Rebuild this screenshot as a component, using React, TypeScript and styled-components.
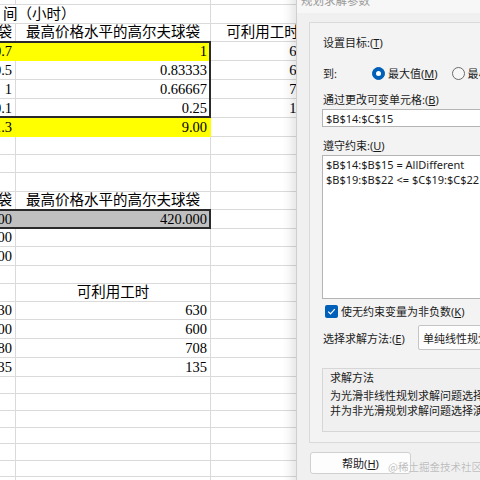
import React from 'react';
import styled, { createGlobalStyle } from 'styled-components';

const Global = createGlobalStyle`
  html, body { margin: 0; padding: 0; background: #fff; }
  #root { width: 480px; height: 480px; }
`;

const Screen = styled.div`
  position: relative;
  width: 480px;
  height: 480px;
  overflow: hidden;
  background: #fff;
`;

const rowHeights = [5, 19, 18, 19, 19, 19, 19, 19, 18, 18, 19, 18, 19, 18, 19, 18, 18, 18, 19, 19, 19, 17, 17, 17, 16, 17, 16, 17];

const Sheet = styled.div`
  display: grid;
  grid-template-columns: 16px 195px 104px;
  grid-template-rows: ${rowHeights.map((h) => h + 'px').join(' ')};
  font-family: "Liberation Serif", "Noto Sans CJK SC", serif;
  font-size: 14.5px;
  color: #000;
  text-spacing-trim: space-all;
`;

type Align = 'l' | 'r' | 'c';

const Cell = styled.div<{ $fill?: string; $align?: Align; $span?: number; $row: number; $col: number }>`
  box-sizing: border-box;
  grid-row: ${(p) => p.$row};
  grid-column: ${(p) => p.$col} / span ${(p) => p.$span ?? 1};
  border-right: 1px solid ${(p) => p.$fill ?? '#dadada'};
  border-bottom: 1px solid ${(p) => p.$fill ?? '#dadada'};
  background: ${(p) => p.$fill ?? '#fff'};
  overflow: hidden;
  white-space: nowrap;
  display: flex;
  align-items: flex-end;
  justify-content: ${(p) => (p.$align === 'r' ? 'flex-end' : p.$align === 'c' ? 'center' : 'flex-start')};
  padding: 0 3px 0 3px;
  line-height: 17px;
`;

const CellText = styled.span`
  flex: none;
`;

const Frame = styled.div<{ $rows: string }>`
  grid-column: 1 / 3;
  grid-row: ${(p) => p.$rows};
  border: 2px solid #2a2a2a;
  border-left: none;
  margin-top: -1px;
  pointer-events: none;
`;

const Y = '#ffff00';
const G = '#c0c0c0';

type C = { t?: string; a?: Align; f?: string; s?: number };
const rows: C[][] = [
  [{}, {}, {}],
  [{ t: '间（小时）', a: 'l', s: 2 }, {}],
  [{ t: '球袋', a: 'r' }, { t: '最高价格水平的高尔夫球袋', a: 'c' }, { t: '可利用工时', a: 'c' }],
  [{ t: '0.7', a: 'r', f: Y }, { t: '1', a: 'r', f: Y }, { t: '630', a: 'r' }],
  [{ t: '0.5', a: 'r' }, { t: '0.83333', a: 'r' }, { t: '600', a: 'r' }],
  [{ t: '1', a: 'r' }, { t: '0.66667', a: 'r' }, { t: '708', a: 'r' }],
  [{ t: '0.1', a: 'r' }, { t: '0.25', a: 'r' }, { t: '135', a: 'r' }],
  [{ t: '1.3', a: 'r', f: Y }, { t: '9.00', a: 'r', f: Y }, {}],
  [{}, {}, {}],
  [{}, {}, {}],
  [{}, {}, {}],
  [{ t: '球袋', a: 'r' }, { t: '最高价格水平的高尔夫球袋', a: 'c' }, {}],
  [{ t: '600.000', a: 'r', f: G }, { t: '420.000', a: 'r', f: G }, {}],
  [{ t: '600.000', a: 'r' }, {}, {}],
  [{ t: '300.000', a: 'r' }, {}, {}],
  [{}, {}, {}],
  [{}, { t: '可利用工时', a: 'c' }, {}],
  [{ t: '630', a: 'r' }, { t: '630', a: 'r' }, {}],
  [{ t: '600', a: 'r' }, { t: '600', a: 'r' }, {}],
  [{ t: '480', a: 'r' }, { t: '708', a: 'r' }, {}],
  [{ t: '135', a: 'r' }, { t: '135', a: 'r' }, {}],
  [{}, {}, {}],
  [{}, {}, {}],
  [{}, {}, {}],
  [{}, {}, {}],
  [{}, {}, {}],
  [{}, {}, {}],
  [{}, {}, {}],
];

/* ---------- dialog ---------- */

const Dialog = styled.div`
  position: absolute;
  left: 296px;
  top: -12px;
  width: 320px;
  height: 500px;
  background: #f0f0f0;
  border-left: 1px solid #cfcfcf;
  box-shadow: -5px 0 9px rgba(0, 0, 0, 0.1);
  display: flex;
  flex-direction: column;
  font-family: "Noto Sans", "Noto Sans CJK SC", sans-serif;
  font-size: 11px;
  color: #1b1b1b;
`;

const TitleBar = styled.div`
  height: 25px;
  flex: none;
  background: #f7f7f7;
  color: #9a9a9a;
  font-size: 11.5px;
  padding-left: 4px;
  display: flex;
  align-items: center;
  line-height: 1;
`;

const Body = styled.div`
  padding: 9px 0 0 12px;
  display: flex;
  flex-direction: column;
`;

const Group = styled.div`
  border: 1px solid #dadada;
  background: #f3f3f3;
  padding: 12px 0 10px 13px;
  display: flex;
  flex-direction: column;
`;

const Label = styled.div<{ $mt?: number }>`
  line-height: 16px;
  margin-top: ${(p) => p.$mt ?? 0}px;
  white-space: nowrap;
`;

const OptionRow = styled.div<{ $mt: number; $h: number }>`
  display: flex;
  align-items: center;
  height: ${(p) => p.$h}px;
  margin-top: ${(p) => p.$mt}px;
  white-space: nowrap;
`;

const FixedLabel = styled.span<{ $w: number }>`
  width: ${(p) => p.$w}px;
  flex: none;
`;

const RadioItem = styled.span<{ $ml?: number }>`
  display: inline-flex;
  align-items: center;
  gap: 3px;
  margin-left: ${(p) => p.$ml ?? 0}px;
`;

const RadioDot = styled.span<{ $on?: boolean }>`
  box-sizing: border-box;
  width: 13px;
  height: 13px;
  border-radius: 50%;
  flex: none;
  background: ${(p) => (p.$on ? '#005fb8' : '#f7f7f7')};
  border: 1px solid ${(p) => (p.$on ? '#005fb8' : '#6a6a6a')};
  display: flex;
  align-items: center;
  justify-content: center;
  &::after {
    content: '';
    display: ${(p) => (p.$on ? 'block' : 'none')};
    width: 5px;
    height: 5px;
    border-radius: 50%;
    background: #fff;
  }
`;

const TextBox = styled.div<{ $h: number }>`
  box-sizing: border-box;
  margin: 1px 0 0 -1px;
  width: 300px;
  height: ${(p) => p.$h}px;
  background: #fff;
  border: 1px solid #b4b4b4;
  padding: 1px 3px;
  line-height: 15px;
  white-space: nowrap;
`;

const CheckBox = styled.span`
  box-sizing: border-box;
  width: 13px;
  height: 13px;
  margin-left: 2px;
  margin-right: 3px;
  border-radius: 2px;
  background: #005fb8;
  display: flex;
  align-items: center;
  justify-content: center;
  flex: none;
`;

const Select = styled.div`
  box-sizing: border-box;
  height: 25px;
  width: 200px;
  background: #fdfdfd;
  border: 1px solid #c4c4c4;
  border-radius: 2px;
  padding-left: 4px;
  display: flex;
  align-items: center;
`;

const SolveBox = styled.div`
  box-sizing: border-box;
  margin: 18px 0 0 -1px;
  height: 64px;
  width: 300px;
  border: 1px solid #d6d6d6;
  background: #f0f0f0;
  padding: 1px 0 0 7px;
  line-height: 15px;
  white-space: nowrap;
`;

const SolveTitle = styled.div`
  margin-bottom: 3px;
`;

const HelpButton = styled.div`
  box-sizing: border-box;
  margin: 9px 0 0 1px;
  width: 101px;
  height: 22px;
  background: #fdfdfd;
  border: 1px solid #d0d0d0;
  border-radius: 3px;
  display: flex;
  align-items: center;
  justify-content: center;
`;

const Watermark = styled.div`
  position: absolute;
  left: 388px;
  top: 460px;
  font-family: "Noto Sans CJK SC", sans-serif;
  font-size: 10.5px;
  line-height: 14px;
  color: #bdbdbd;
  text-shadow: 0 0 1px #fff;
  white-space: nowrap;
`;

export default function App() {
  return (
    <>
      <Global />
      <Screen>
        <Sheet>
          {rows.map((r, i) => {
            let col = 1;
            return r.map((c, j) => {
              const at = col;
              col += c.s ?? 1;
              return (
                <Cell key={`${i}-${j}`} $row={i + 1} $col={at} $fill={c.f} $align={c.a} $span={c.s}>
                  {c.t ? <CellText>{c.t}</CellText> : null}
                </Cell>
              );
            });
          })}
          <Frame $rows="4 / 8" />
          <Frame $rows="13 / 14" />
        </Sheet>

        <Dialog>
          <TitleBar>规划求解参数</TitleBar>
          <Body>
            <Group>
              <Label>
                设置目标:(<u>T</u>)
              </Label>
              <OptionRow $mt={12} $h={20}>
                <FixedLabel $w={49}>到:</FixedLabel>
                <RadioItem>
                  <RadioDot $on />
                  <span>
                    最大值(<u>M</u>)
                  </span>
                </RadioItem>
                <RadioItem $ml={14}>
                  <RadioDot />
                  <span>
                    最小值(<u>N</u>)
                  </span>
                </RadioItem>
              </OptionRow>
              <Label $mt={9}>
                通过更改可变单元格:(<u>B</u>)
              </Label>
              <TextBox $h={18}>$B$14:$C$15</TextBox>
              <Label $mt={11}>
                遵守约束:(<u>U</u>)
              </Label>
              <TextBox $h={144}>
                <div>$B$14:$B$15 = AllDifferent</div>
                <div>$B$19:$B$22 &lt;= $C$19:$C$22</div>
              </TextBox>
              <OptionRow $mt={4} $h={16}>
                <CheckBox>
                  <svg width="9" height="9" viewBox="0 0 9 9">
                    <path d="M1.2 4.6 L3.5 6.8 L7.8 2.2" fill="none" stroke="#fff" strokeWidth="1.2" />
                  </svg>
                </CheckBox>
                <span>
                  使无约束变量为非负数(<u>K</u>)
                </span>
              </OptionRow>
              <OptionRow $mt={6} $h={25}>
                <FixedLabel $w={95}>
                  选择求解方法:(<u>E</u>)
                </FixedLabel>
                <Select>单纯线性规划</Select>
              </OptionRow>
              <SolveBox>
                <SolveTitle>求解方法</SolveTitle>
                <div>为光滑非线性规划求解问题选择 GRG 非线性引擎。</div>
                <div>并为非光滑规划求解问题选择演化引擎。</div>
              </SolveBox>
            </Group>
            <HelpButton>
              帮助(<u>H</u>)
            </HelpButton>
          </Body>
        </Dialog>
        <Watermark>@稀土掘金技术社区</Watermark>
      </Screen>
    </>
  );
}
